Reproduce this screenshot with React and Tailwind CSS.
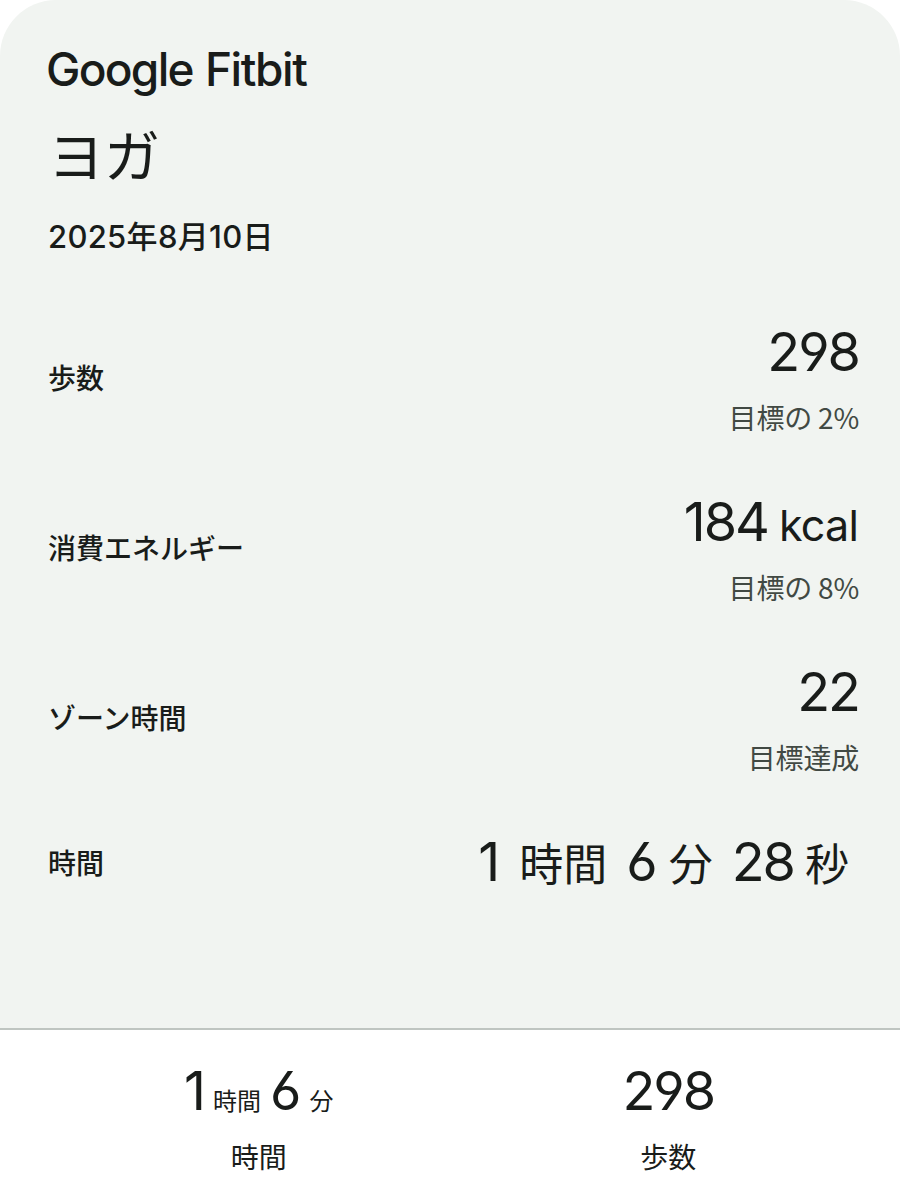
const metrics = [
  { label: "歩数", value: "298", unit: "", goal: "目標の 2%" },
  { label: "消費エネルギー", value: "184", unit: "kcal", goal: "目標の 8%" },
  { label: "ゾーン時間", value: "22", unit: "", goal: "目標達成" },
];

const digits =
  "font-['Inter'] [font-feature-settings:'cv03','cv04'] text-[54px] tracking-[-2px]";

const MetricRow = ({ label, value, unit, goal }) => (
  <div className="flex h-[170px] items-center justify-between">
    <div className="pb-1 text-[28px] font-medium">{label}</div>
    <div className="flex flex-col items-end pt-2.5">
      <div className="flex h-[67px] items-center pt-0.5">
        <div className="flex items-baseline gap-[11px]">
          <span className={digits}>{value}</span>
          {unit && (
            <span className="pr-px font-['Inter'] text-[43px] tracking-[-0.8px]">{unit}</span>
          )}
        </div>
      </div>
      <div className="flex h-[67px] items-center pb-px text-[28px] tracking-[-0.2px] text-[#414943]">
        {goal}
      </div>
    </div>
  </div>
);

const App = () => {
  return (
    <div className="flex h-[1200px] w-[900px] flex-col overflow-hidden bg-white font-['Noto_Sans_CJK_JP',sans-serif] leading-none whitespace-nowrap text-[#191c1a]">
      <main className="flex h-[1028px] flex-col rounded-t-[56px] bg-[#f1f4f1] pr-[41px] pl-12">
        <div className="-ml-0.5 flex h-[104px] items-end gap-3 font-['Inter'] text-[46px] leading-[70px] font-medium">
          <span className="tracking-[-1.7px]">Google</span>
          <span className="tracking-[-1.4px]">Fitbit</span>
        </div>
        <h1 className="h-[104px] text-[56px] leading-[98px]">ヨガ</h1>
        <div className="flex h-[86px] items-center pb-[30px] font-['Inter','Noto_Sans_CJK_JP',sans-serif] text-[31px] font-medium tracking-[0.3px] [font-feature-settings:'cv03','cv04']">
          2025年8月10日
        </div>
        {metrics.map((metric) => (
          <MetricRow key={metric.label} {...metric} />
        ))}
        <div className="flex h-[120px] items-center justify-between">
          <div className="pb-1 text-[28px] font-medium">時間</div>
          <div className="flex items-baseline pr-2.5 pb-1 text-[44px]">
            <span className={digits}>1</span>
            <span className="ml-[21px]">時間</span>
            <span className={`${digits} ml-[19px]`}>6</span>
            <span className="ml-[13px]">分</span>
            <span className={`${digits} ml-[19px]`}>28</span>
            <span className="ml-[11px]">秒</span>
          </div>
        </div>
      </main>

      <footer className="flex flex-1 border-t-2 border-[#bfc5c1] pr-[26px] pl-[54px] text-center">
        <div className="flex flex-1 flex-col items-center pt-[34px]">
          <div className="flex h-[64px] items-baseline text-[24px]">
            <span className={digits}>1</span>
            <span className="ml-[9px]">時間</span>
            <span className={`${digits} ml-[9px]`}>6</span>
            <span className="ml-2.5">分</span>
          </div>
          <div className="mt-[14px] text-[28px]">時間</div>
        </div>
        <div className="flex flex-1 flex-col items-center pt-[34px] pr-px">
          <div className="flex h-[64px] items-baseline">
            <span className={digits}>298</span>
          </div>
          <div className="mt-[14px] text-[28px]">歩数</div>
        </div>
      </footer>
    </div>
  );
};

export default App;
